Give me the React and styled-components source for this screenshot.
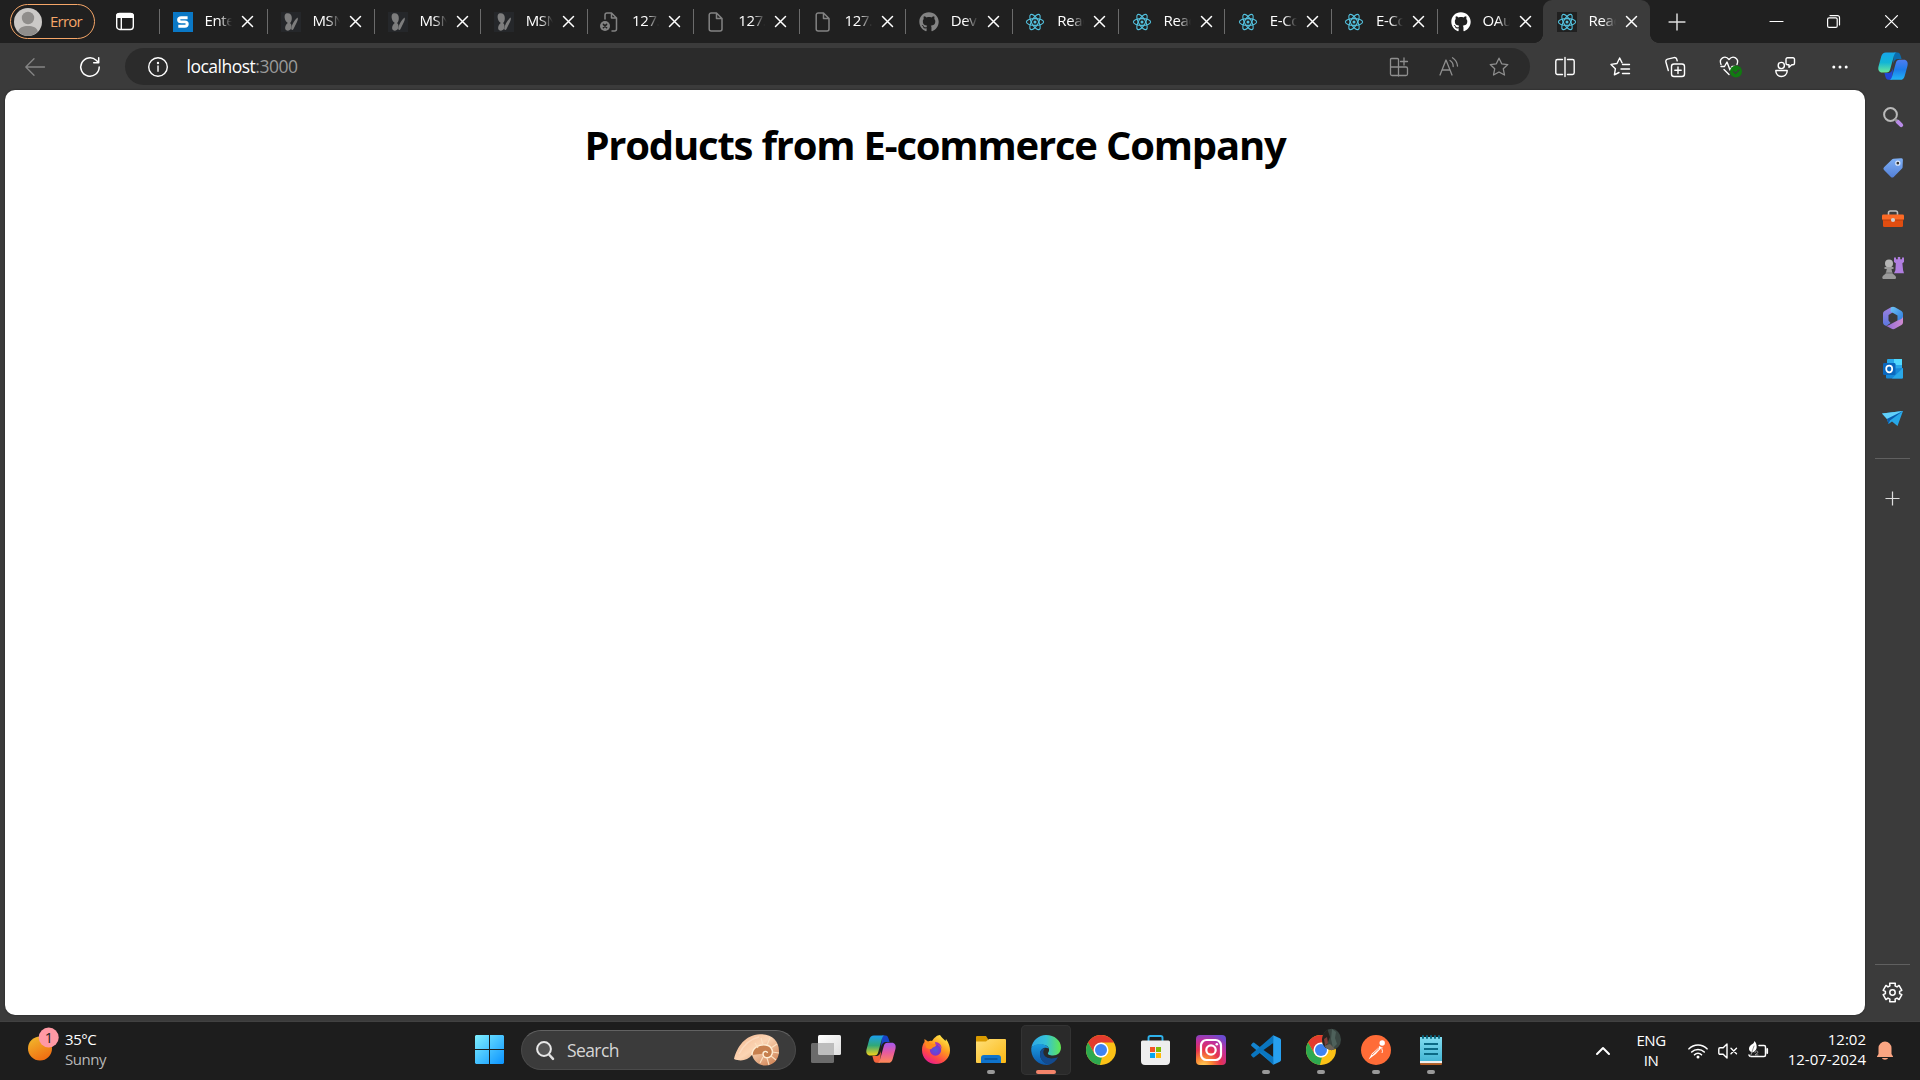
import React from "react";
import styled, { createGlobalStyle, css } from "styled-components";
import { FaGithub } from "react-icons/fa";

const Global = createGlobalStyle`
  * { box-sizing: border-box; }
  html, body { margin: 0; padding: 0; background: #3b3b3b; }
  body { font-family: "Open Sans", "Noto Sans", sans-serif; overflow: hidden; }
  svg { display: block; flex: none; overflow: visible; }
`;

const Screen = styled.div`
  width: 1920px; height: 1080px; display: flex; flex-direction: column;
  background: #3b3b3b; color: #fff;
`;
const TabBar = styled.div`
  height: 43px; flex: none; display: flex; background: #202020; padding-left: 10px;
`;
const Profile = styled.div`
  width: 85px; height: 35px; margin-top: 4px; border: 1.4px solid #f5a668; border-radius: 18px;
  display: flex; align-items: center; padding-left: 3px; gap: 8px; color: #f5a668;
  font-size: 15px; letter-spacing: -0.75px; line-height: 20px;
`;
const ProfileName = styled.span`margin-top: -2px;`;
const WorkspaceBox = styled.div`
  width: 64px; padding: 12px 0 0 21px;
`;
const Tabs = styled.div`display: flex;`;
const Tab = styled.div`
  width: ${(p) => p.$w}px; height: 43px; display: flex; align-items: center; position: relative;
  padding-left: 13.5px;
  ${(p) => p.$active ? css`
    background: #3b3b3b; border-radius: 9px 9px 0 0; margin-left: -1px;
    &::before, &::after { content: ""; position: absolute; bottom: 0; width: 9px; height: 9px; }
    &::before { left: -9px; background: radial-gradient(circle at 0 0, #202020 8.6px, #3b3b3b 9.2px); }
    &::after { right: -9px; background: radial-gradient(circle at 100% 0, #202020 8.6px, #3b3b3b 9.2px); }
  ` : css`
    &::before { content: ""; position: absolute; left: 0; top: 9px; width: 1px; height: 25px; background: #6b6b6b; }
  `}
`;
const Favicon = styled.div`
  width: 20px; height: 20px; flex: none; display: flex; align-items: center; justify-content: center;
  background: ${(p) => p.$bg || "transparent"};
  color: ${(p) => p.$color || "#fff"};
`;
const TabTitle = styled.span`
  width: 36px; flex: none; margin: -3px 0 0 12px; white-space: nowrap; font-size: 15px; line-height: 20px;
  letter-spacing: -0.4px; color: #fff;
  mask-image: linear-gradient(90deg, #000 14px, transparent 27px);
`;
const TabClose = styled.div`margin-left: 1px;`;
const WindowButtons = styled.div`
  margin-left: auto; display: flex; align-items: center;
`;
const WindowButton = styled.div`
  width: ${(p) => p.$w || 57.5}px; display: flex; justify-content: center;
`;
const NewTab = styled.div`width: 54px; display: flex; align-items: center; justify-content: center;`;

const Body = styled.div`flex: 1; display: flex; min-height: 0;`;
const Main = styled.div`width: 1865px; display: flex; flex-direction: column;`;
const Toolbar = styled.div`
  height: 47px; display: flex; align-items: flex-start; padding: 5px 0 0 7.5px;
`;
const NavSlot = styled.div`
  width: 55px; height: 37px; flex: none; display: flex; align-items: center; justify-content: center;
`;
const AddressBar = styled.div`
  width: 1405px; height: 37px; flex: none; border-radius: 19px; background: #2b2b2b; margin-left: 7.5px;
  display: flex; align-items: center; padding-left: 22.5px;
`;
const Address = styled.span`
  margin: -1px auto 0 19px; font-size: 17.5px; line-height: 24px; letter-spacing: -0.5px; color: #fff;
  span { color: #9a9a9a; }
`;
const AddressIcons = styled.div`
  display: flex; width: 150px; margin-right: 6px; color: #8f8f8f;
`;
const AddressSlot = styled.div`width: 50px; display: flex; justify-content: center;`;
const ToolbarIcons = styled.div`display: flex; margin-left: 7px;`;
const Page = styled.div`
  flex: none; height: 925px; margin-left: 5px; border-radius: 10px; background: #fff; color: #000;
  box-shadow: 0 0 2px rgba(0,0,0,.5);
`;
const Heading = styled.h1`
  margin: 0; padding-top: 28px; text-align: center; font-size: 40px; line-height: 54px; font-weight: 700;
  letter-spacing: -1.2px; white-space: nowrap;
`;
const Sidebar = styled.div`
  width: 55px; display: flex; flex-direction: column; align-items: center; padding-top: 4px;
`;
const SideSlot = styled.div`
  height: ${(p) => p.$h || 50.2}px; width: 55px; flex: none; display: flex; align-items: center; justify-content: center;
`;
const SideLine = styled.div`width: 35px; height: 1px; flex: none; background: #606060; margin-top: ${(p) => p.$mt || 0}px;`;

const Taskbar = styled.div`
  height: 59px; flex: none; display: flex; align-items: stretch; background: #1d1d1d; border-top: 1px solid #414141;
`;
const Weather = styled.div`width: 462px; display: flex; padding: 4px 0 0 27px; gap: 6px;`;
const TaskText = styled.div`
  font-size: 15px; line-height: 20px; letter-spacing: ${(p) => p.$ls ?? -0.45}px; text-align: ${(p) => p.$align || "left"};
  padding-top: ${(p) => p.$pt ?? 3}px; color: #fff; white-space: nowrap; width: ${(p) => p.$w ? p.$w + "px" : "auto"};
`;
const Dim = styled.div`color: #b9b9b9;`;
const AppSlot = styled.div`
  width: 55px; display: flex; flex-direction: column; align-items: center; padding-top: 3px;
`;
const AppTile = styled.div`
  width: 50px; height: 50px; border-radius: 5px; display: flex; flex-direction: column; align-items: center;
  justify-content: flex-end;
  ${(p) => p.$active && css`background: #2a2a2a; box-shadow: inset 0 0 0 1px #333;`}
`;
const AppIcon = styled.div`height: 30px; margin-bottom: 5px;`;
const Indicator = styled.div`
  height: 4px; border-radius: 2px; margin-bottom: 1px;
  width: ${(p) => (p.$state === "active" ? 20 : 8)}px;
  background: ${(p) => (p.$state === "active" ? "#f4846a" : p.$state === "open" ? "#999" : "transparent")};
`;
const SearchPill = styled.div`
  width: 275px; height: 40px; margin: 8px 2.5px 0 4px; border-radius: 20px; background: #3b3b3b;
  border: 1px solid #4a4a4a; border-top-color: #626262; display: flex; align-items: center; padding: 0 16px 0 14px;
`;
const SearchText = styled.span`
  margin: -1px auto 0 13px; font-size: 17.5px; letter-spacing: -0.6px; color: #d6d6d6;
`;
const Tray = styled.div`margin-left: auto; display: flex; align-items: flex-start; padding-right: 16px;`;
const TrayIcon = styled.div`
  width: ${(p) => p.$w}px; height: 57px; display: flex; align-items: center; justify-content: center;
`;

const Svg = ({ s = 20, w, h, vb, children, ...rest }) => (
  <svg width={w || s} height={h || s} viewBox={vb || `0 0 ${w || s} ${h || s}`} fill="none" {...rest}>{children}</svg>
);
const Line = ({ sw = 1.4, color = "currentColor", children, ...r }) => (
  <Svg stroke={color} strokeWidth={sw} strokeLinecap="round" strokeLinejoin="round" {...r}>{children}</Svg>
);

const ReactLogo = () => (
  <Line s={20} color="#53c1de" sw={1.1}>
    {[0, 60, 120].map((a) => <ellipse key={a} cx="10" cy="10" rx="8.6" ry="3.4" transform={`rotate(${a} 10 10)`} />)}
    <circle cx="10" cy="10" r="1.5" fill="#53c1de" stroke="none" />
  </Line>
);
const Butterfly = () => (
  <Svg s={20} fill="#7d7d7d">
    <path d="M5 1.5C8 .5 11 2 10.8 6c0 2.5-.5 4-1.8 5 1.5 1 2 3 1 5.5-.8 2-3.500 2.8-5 1.500-1.500-1.300-1-5 1.800-7C3.500 9 2.500 3 5 1.500z" />
    <path d="M16.500 5.500c.8 1 .2 3-.8 5l-3.200 6.500c-.7 1.500-2.500 1-2.300-.5.3-3 2.800-8 6.300-11z" />
  </Svg>
);
const SLogo = () => (
  <Svg s={20}><path d="M14.600 5.700H8.200c-3.500 0-3.500 4.200 0 4.200h3.600c3.300 0 3.300 4.400 0 4.400H5.300" stroke="#fff" strokeWidth="2.900" /></Svg>
);
const FileIcon = ({ error }) => (
  <Line s={20} color="#838383" sw={1.5}>
    <path d={error ? "M5 7V3a2 2 0 0 1 2-2h4.500l5 5v11a2 2 0 0 1-2 2H12M11.500 1v5h5" : "M5.200 1h5.300l5.500 5.500V17a2 2 0 0 1-2 2H5.200a2 2 0 0 1-2-2V3a2 2 0 0 1 2-2zM10.500 1v5.500H16"} />
    {error && <><circle cx="5" cy="14" r="5" fill="#838383" stroke="none" /><path d="M3.400 12.400l3.200 3.200M6.600 12.400l-3.200 3.200" stroke="#202020" strokeWidth="1.500" /></>}
  </Line>
);
const Cross = ({ s = 11, sw = 1.5 }) => <Line s={s} sw={sw} color="#fff" vb="0 0 11 11"><path d="M.5.5l10 10M10.500.5l-10 10" /></Line>;
const Avatar = () => (
  <Svg s={28}>
    <circle cx="14" cy="14" r="14" fill="#cbc9c7" />
    <circle cx="14" cy="10" r="6.200" fill="#8f8d8b" />
    <path d="M4.200 23.500C5 19.500 9 18 14 18s9 1.500 9.800 5.500A14 14 0 0 1 14 28a14 14 0 0 1-9.800-4.500z" fill="#8f8d8b" />
  </Svg>
);
const WorkspaceIcon = () => (
  <Svg w={18} h={19}>
    <rect x=".7" y="1.500" width="16.600" height="16" rx="3" stroke="#fff" strokeWidth="1.400" />
    <path d="M0 6V4a3 3 0 0 1 3-3h12a3 3 0 0 1 3 3v2z" fill="#fff" /><path d="M5.300 6v11" stroke="#fff" strokeWidth="1.400" />
  </Svg>
);

const BackIcon = () => <Line w={20} h={18} color="#858585" sw={1.300}><path d="M19.500 9H.8M9 .8L.8 9 9 17.200" /></Line>;
const ReloadIcon = () => <Line s={20} sw={1.500}><path d="M19.200 10A9.200 9.200 0 1 1 16.200 3.200L18.500 5.500M18.700.800v5h-5" /></Line>;
const InfoIcon = () => <Line s={20} sw={1.400}><circle cx="10" cy="10" r="9.300" /><path d="M10 9v5.300" /><circle cx="10" cy="6" r=".5" fill="#fff" /></Line>;
const AppsIcon = () => <Line s={20} sw={1.300}><path d="M9.500 19V2.500a1 1 0 0 0-1-1H2.500a1 1 0 0 0-1 1V17a1.500 1.500 0 0 0 1.500 1.500h14a1.500 1.500 0 0 0 1.500-1.500v-5.500a1.500 1.500 0 0 0-1.500-1.500h-15.500M15 1v7M11.500 4.500h7" /></Line>;
const ReadIcon = () => <Line s={20} sw={1.300}><path d="M1 18L7 3l6 15M3.200 13h7.600M11 3.500a7 7 0 0 1 3.200 6M13.500.8A11 11 0 0 1 18.500 9" /></Line>;
const starPath = "M10 1.200l2.700 5.600 6.100.8-4.500 4.200 1.200 6.200-5.500-3-5.500 3 1.200-6.200L1.200 7.600l6.100-.8z";
const StarIcon = () => <Line s={20} sw={1.300}><path d={starPath} /></Line>;
const SplitIcon = () => <Line s={20} sw={1.400}><path d="M7.500 2.500h-5A1.700 1.700 0 0 0 .8 4.200v11.600a1.700 1.700 0 0 0 1.700 1.700h5M12.500 2.500h5a1.700 1.700 0 0 1 1.700 1.700v11.600a1.700 1.700 0 0 1-1.700 1.700h-5M10 .5v19" /></Line>;
const FavIcon = () => <Line s={20} sw={1.400}><path d="M12 5.800L9.700 1 7 6.500 1 7.400l4.400 4.300-1 6.100L9 15.500M12.500 7.500h7M11 12h8.500M12.500 16.500h7" /></Line>;
const CollectionIcon = () => <Line s={20} sw={1.400}><rect x="6.500" y="7" width="13" height="12.500" rx="2.500" /><path d="M13 10v6.500M9.800 13.200h6.400M3.300 13.500L.9 5a2.300 2.300 0 0 1 1.700-2.900L9 .6a2.300 2.300 0 0 1 2.800 1.700l.4 1.600" /></Line>;
const HeartIcon = () => (
  <Line w={22} h={21} sw={1.400}>
    <path d="M2 8.500C-.5 2.500 6-1.500 10 3.500c4-5 10.500-1 8 5M2 10.500h3.500l2.500-4.500 3 8 2-3.500h3M5 13.500l5 5" />
    <circle cx="17" cy="15.500" r="6" fill="#107c10" stroke="none" /><path d="M14.500 15.500l2 2 3.500-3.500" stroke="#3b3b3b" strokeWidth="1.200" />
  </Line>
);
const PeopleIcon = () => <Line s={20} sw={1.400}><circle cx="6.300" cy="8.500" r="3.100" /><path d="M.8 13.500h11.400c.2 8-11.600 8-11.400 0zM12.500 .8h5.500a1.500 1.500 0 0 1 1.500 1.500v4A1.500 1.500 0 0 1 18 7.800h-1.200l-2.800 2.500V7.800h-1.500a1.500 1.500 0 0 1-1.500-1.500v-4A1.500 1.500 0 0 1 12.500.8z" /></Line>;
const DotsIcon = () => <Svg w={16} h={4} fill="#fff"><circle cx="1.800" cy="2" r="1.500" /><circle cx="8" cy="2" r="1.500" /><circle cx="14.200" cy="2" r="1.500" /></Svg>;

const Copilot = ({ colors, id, s = 30 }) => (
  <Svg w={s} h={s * 0.94} vb="0 0 30 28">
    <defs>
      <linearGradient id={id + "a"} x1="0" y1="0" x2="0" y2="1"><stop stopColor={colors[0]} /><stop offset=".5" stopColor={colors[1]} /><stop offset="1" stopColor={colors[2]} /></linearGradient>
      <linearGradient id={id + "b"} x1="0" y1="0" x2="0" y2="1"><stop stopColor={colors[3]} /><stop offset=".5" stopColor={colors[4]} /><stop offset="1" stopColor={colors[5]} /></linearGradient>
    </defs>
    <path d="M16 .3h3.500c2 0 2.600 1.600 3.200 3.600l.9 3.100H20c-3 0-4 2-5 5z" fill={colors[6]} />
    <path d="M14 27.700h-3.500c-2 0-2.600-1.600-3.200-3.600L6.400 21H10c3 0 4-2 5-5z" fill={colors[7]} />
    <path d="M8 .3h11c-2 0-2.500 1.500-3.200 3.800l-3.600 13c-.7 2.400-1.700 3.300-3.700 3.300H4.200c-3 0-4.500-2.400-3.700-6L3.300 4.200C4 1.500 5.500.3 8 .3z" fill={`url(#${id}a)`} />
    <path d="M22 27.700H11c2 0 2.500-1.500 3.200-3.800l3.600-13c.7-2.400 1.700-3.300 3.700-3.300h4.300c3 0 4.500 2.400 3.700 6l-2.800 10.200c-.7 2.700-2.200 3.900-4.700 3.900z" fill={`url(#${id}b)`} />
  </Svg>
);

const SideSearch = () => (
  <Svg s={20}><circle cx="7.500" cy="7.500" r="6.400" stroke="#b9b9b9" strokeWidth="2" /><path d="M14.500 14.500l3.700 3.700" stroke="#b98be8" strokeWidth="4" strokeLinecap="round" /><path d="M12 12l2 2" stroke="#999" strokeWidth="2" /></Svg>
);
const Tag = () => (
  <Svg s={20}><defs><linearGradient id="tag" x2="0" y2="1"><stop stopColor="#7fb0f5" /><stop offset="1" stopColor="#5380d8" /></linearGradient></defs>
    <path d="M10.500.7L18 .2a1.700 1.700 0 0 1 1.900 1.900l-.3 7.200a2 2 0 0 1-.6 1.300l-8.300 8.300a2 2 0 0 1-2.800 0L1 12a2 2 0 0 1 0-2.800l8.200-7.900a2 2 0 0 1 1.300-.6z" fill="url(#tag)" />
    <circle cx="14.800" cy="5.200" r="2" stroke="#dce8fb" strokeWidth="1.300" fill="#333" /></Svg>
);
const Toolbox = () => (
  <Svg w={22} h={17}><path d="M6.500 5V2.800A1.800 1.800 0 0 1 8.300 1h5.400a1.800 1.800 0 0 1 1.800 1.800V5" stroke="#bdbdbd" strokeWidth="1.600" />
    <rect x="1" y="8" width="20" height="9" rx="1.200" fill="#e04d10" /><rect x="0" y="4.500" width="22" height="5.500" rx="1.200" fill="#fb6a26" /><path d="M.5 10h21" stroke="#b83e0c" />
    <circle cx="11" cy="10" r="2.100" fill="#cfcfcf" /></Svg>
);
const Chess = () => (
  <Svg w={22} h={22} vb="0 0 22 22">
    <path d="M12 .5h2v1.700h1.800V0h2.400v2.200H20V.5h2V5l-1.600 1.300.7 7 .9 3H12l1.400-3 .4-7L12 5z" fill="#b07ee0" />
    <circle cx="7" cy="6.500" r="4" fill="#b5b5b5" /><path d="M2.500 10h9v2H9.500l1 4.500 3 2.500a2.500 2.500 0 0 1 0 3H.8a2.500 2.500 0 0 1 0-3l3-2.500 1-4.500H2.500z" fill="#9a9a9a" /><path d="M3.500 16h7" stroke="#6d6d6d" /></Svg>
);
const M365 = () => (
  <Svg w={20} h={22}>
    <defs>
      <linearGradient id="m1" x2="0" y2="1"><stop stopColor="#a080e0" /><stop offset="1" stopColor="#5b78e0" /></linearGradient>
      <linearGradient id="m2" x2="1" y2="1"><stop stopColor="#6fc4f5" /><stop offset="1" stopColor="#2b78dd" /></linearGradient>
      <linearGradient id="m3" x2="1"><stop stopColor="#8a6ad8" /><stop offset="1" stopColor="#d08ad0" /></linearGradient>
    </defs>
    <path d="M8 .2L1.500 4A3 3 0 0 0 0 6.500v9c0 2 1.500 3.200 3.500 3.200L7.500 16l-2-2.500V8L12 4z" fill="url(#m1)" />
    <path d="M8 .3a4 4 0 0 1 4 0l6.500 3.800A3.500 3.500 0 0 1 20 7v5l-5.500 2.500V8.500L7.500 4.500z" fill="url(#m2)" />
    <path d="M20 9v6.500a3 3 0 0 1-1.500 2.500l-6.300 3.600a4 4 0 0 1-4 0L2 18.200c2 1 3.700.3 5-.7l7.500-4c2.500-1 5.500-1.500 5.500-4.500z" fill="url(#m3)" />
  </Svg>
);
const Outlook = () => (
  <Svg s={20}><rect x="4" y="0" width="15" height="12" rx="1" fill="#28a8ea" /><rect x="11" y="0" width="8" height="6" fill="#50d9ff" /><path d="M3 10l17-1v9.500a1 1 0 0 1-1 1H4a1 1 0 0 1-1-1z" fill="#1688d8" /><path d="M20 9L9 19.500h10a1 1 0 0 0 1-1z" fill="#2aa8e8" />
    <rect x="0" y="4" width="12.500" height="12" rx="1.300" fill="#0a67bd" /><ellipse cx="6.200" cy="10" rx="3" ry="3.300" stroke="#fff" strokeWidth="1.700" /></Svg>
);
const Telegram = () => (
  <Svg w={21} h={15}><path d="M0 2.500L21 0l-5.500 15L10 10.500 6.500 13 5 8z" fill="#27a7e7" /><path d="M0 2.500L21 0 5 8z" fill="#61d0fb" /><path d="M5 8L21 0 8 9.500 6.500 13z" fill="#0b5cad" /></Svg>
);
const Plus = ({ s = 16, sw = 1.300 }) => <Line s={s} sw={sw} color="#ddd" vb="0 0 16 16"><path d="M8 .5v15M.5 8h15" strokeLinecap="butt" /></Line>;
const gearPts = () => {
  const out = [];
  for (let i = 0; i < 6; i++) {
    [[-17, 9.600], [17, 9.600], [21, 7.200], [39, 7.200]].forEach(([d, r]) => {
      const a = ((i * 60 + d - 90) * Math.PI) / 180;
      out.push(`${(10.500 + r * Math.cos(a)).toFixed(2)},${(10.500 + r * Math.sin(a)).toFixed(2)}`);
    });
  }
  return out.join(" ");
};
const Gear = () => <Line s={21} sw={1.500}><polygon points={gearPts()} /><circle cx="10.500" cy="10.500" r="2.700" /></Line>;

const SunIcon = () => (
  <Svg w={32} h={34}><defs><linearGradient id="sun" x1=".2" y1="0" x2=".7" y2="1"><stop stopColor="#f0b72c" /><stop offset="1" stopColor="#f16a10" /></linearGradient></defs>
    <circle cx="13" cy="22.500" r="12" fill="url(#sun)" /><circle cx="21.700" cy="11.500" r="10" fill="#ff99a4" />
    <text x="22" y="17" fontSize="14.500" textAnchor="middle" fill="#222" fontFamily="Open Sans, sans-serif">1</text></Svg>
);
const StartIcon = () => (
  <Svg s={29}><defs><linearGradient id="win" gradientUnits="userSpaceOnUse" x2="29" y2="29"><stop stopColor="#7ff0ff" /><stop offset="1" stopColor="#0b93ff" /></linearGradient></defs>
    <path fill="url(#win)" d="M1 0h13v14H0V1zM15 0h13l1 1v13H15zM0 15h14v14H1l-1-1zM15 15h14v13l-1 1H15z" /></Svg>
);
const SearchIcon = () => <Svg w={18} h={19}><circle cx="8" cy="8" r="6.900" fill="#555" stroke="#e8e8e8" strokeWidth="2" /><path d="M13 13.500l4 4.300" stroke="#e0e0e0" strokeWidth="2.500" strokeLinecap="round" /></Svg>;
const Shell = () => (
  <Svg w={45} h={32}><defs><linearGradient id="sh" x2="1" y2="1"><stop stopColor="#f2b58d" /><stop offset=".45" stopColor="#fbd4b3" /><stop offset="1" stopColor="#c97848" /></linearGradient></defs>
    <path d="M0 25C3 13 11 1 26 .3 38 0 45 7 45 17c0 9-6 14.500-13.500 14.500C24 31.500 20 27 18 21c-4 5-11 7-18 4z" fill="url(#sh)" />
    <path d="M18 21c0-7 7-11 14-10 6 1 8 7 5 11-3 3-8 2-8-2 0-3 4-3.500 4.500-1" fill="#c7804e" stroke="#fff0d8" strokeWidth="1.400" />
    <path d="M29 11L27 4M33 11l3-7M37 14l6-4M38 18l7 1M37 22l5 4M33 24l2 7M29 23l-3 6M24 14l-3-5" stroke="#fbe0c0" strokeWidth="1.100" />
    <path d="M5 20C9 12 15 5 25 3" stroke="#fde2cb" strokeWidth="1.500" opacity=".6" /></Svg>
);
const TaskView = () => (
  <Svg w={30} h={28}><defs><linearGradient id="tv" x2="1" y2="1"><stop stopColor="#fff" /><stop offset="1" stopColor="#dedede" /></linearGradient></defs>
    <rect x="7" y="0" width="23" height="20" rx="1.500" fill="url(#tv)" /><rect x="0" y="8" width="23" height="20" rx="1.500" fill="#6b6b6b" /><path d="M7 8h16v12H8.500A1.500 1.500 0 0 1 7 18.500z" fill="#bdbdbd" /></Svg>
);
const Firefox = () => (
  <Svg w={28} h={29}><defs><linearGradient id="ff" x1=".8" x2=".2" y1="0" y2="1"><stop stopColor="#fff44f" /><stop offset=".4" stopColor="#ff9a1e" /><stop offset=".7" stopColor="#ff4a45" /><stop offset="1" stopColor="#e3159b" /></linearGradient>
    <radialGradient id="ffp"><stop stopColor="#4b5ce0" /><stop offset="1" stopColor="#8330c9" /></radialGradient></defs>
    <path d="M18 0c2 3 4 4 5.500 6l.5-2c3 4 4 8 4 11.500C28 23 22 29 14 29S0 23 0 15c0-3.500 1-6 2.500-8V4L6 6.500c2-1 3-.7 4-.5 2-3 5-6 8-6z" fill="url(#ff)" />
    <circle cx="13.500" cy="15" r="5.700" fill="url(#ffp)" /><path d="M3 8c3-2 6 0 7 1 2 0 3.500 0 4.500.5-.5 2.500-4 2.500-5 4.500-1.500 1-3-1-5-1z" fill="#ff8a1c" /><path d="M13 7c4 0 7 3 6.500 7-1-3-3-4-6-4.500z" fill="#a234bb" /></Svg>
);
const Folder = () => (
  <Svg w={30} h={27}><defs><linearGradient id="fo" x2="1" y2="1"><stop stopColor="#ffe07a" /><stop offset="1" stopColor="#fbb813" /></linearGradient></defs>
    <path d="M0 2a1 1 0 0 1 1-1h9l2 3h0v8H0z" fill="#d99a00" /><path d="M0 6.500h10l3-2.500h16a1 1 0 0 1 1 1V27a1 1 0 0 1-1 1H1a1 1 0 0 1-1-1z" fill="url(#fo)" />
    <path d="M5 28v-5a3 3 0 0 1 3-3h14a3 3 0 0 1 3 3v5z" fill="#0f73cc" /><path d="M8.500 24h13" stroke="#064b8e" strokeWidth="1.300" /></Svg>
);
const Edge = () => (
  <Svg s={30} vb="0 0 30 30"><defs>
    <linearGradient id="e1" x1="0" x2="1"><stop stopColor="#2fa8e8" /><stop offset=".5" stopColor="#35c1d8" /><stop offset="1" stopColor="#62e84f" /></linearGradient>
    <linearGradient id="e2" x1="0" y1="0" x2="0" y2="1"><stop stopColor="#1b9de2" /><stop offset="1" stopColor="#0d58ac" /></linearGradient></defs>
    <path d="M.3 13C1.500 5.500 7.500 0 15 0c8.500 0 15 5.500 15 12.500 0 5-3.500 8-8 8-3.500 0-5.500-1-5-2.500 2.500-3 1-8-6-8.500C5 9.500 1.500 11 .3 13z" fill="url(#e1)" />
    <path d="M.3 13C2 10 6 8.500 10.500 9c3.500.4 6 2 7.200 4.500C13 11.500 9 14.500 9 19c0 5 4 10 10 10.500-2 .6-4 .5-6 .3C5 28.500-.5 21 .3 13z" fill="url(#e2)" />
    <path d="M9 19c0-3.500 2.500-5.500 5-5.500-1.500 1.500-2 3-1.500 5 1 4.500 8 6.500 14.500 3.500-1.500 3.500-5 6.500-9 7.700C13 29 9 24.500 9 19z" fill="#134a8e" /></Svg>
);
const Chrome = () => (
  <Svg s={30} vb="0 0 30 30"><circle cx="15" cy="15" r="15" fill="#fbc116" />
    <path d="M2 7.500A15 15 0 0 1 28 7.500H15L8.500 18.750z" fill="#e33b2e" /><path d="M2 7.500L8.500 18.750A7.500 7.500 0 0 0 17 22.200L14.500 30A15 15 0 0 1 2 7.500z" fill="#2da94f" /><path d="M21.500 18.750L15 30h-1l2-8z" fill="#fbc116" />
    <circle cx="15" cy="15" r="7.500" fill="#fff" /><circle cx="15" cy="15" r="6" fill="#3f83f2" /></Svg>
);
const ChromeUser = () => (
  <Svg s={30}><Chrome />
    <defs><clipPath id="cu"><ellipse cx="25.500" cy="4.500" rx="9.500" ry="10.700" /></clipPath></defs>
    <g clipPath="url(#cu)"><rect x="14" y="-7" width="24" height="24" fill="#3a4743" /><path d="M14-2l7-5 3 9-5 12-6-2z" fill="#25221f" /><path d="M26-6l4 3-1 6 2 6-4 4-2-9z" fill="#4e615b" /><path d="M18 4l3-2 1 6-3 3z" fill="#7b3f3a" /><path d="M18 11l6-2 5 5-5 2z" fill="#6b6257" /></g></Svg>
);
const Store = () => (
  <Svg w={29} h={30} style={{ marginRight: 1 }}><path d="M7.500 7V2.800A1.800 1.800 0 0 1 9.300 1h10.400a1.800 1.800 0 0 1 1.800 1.800V7" stroke="#2eb1ea" strokeWidth="1.900" />
    <path d="M0 7a1.500 1.500 0 0 1 1.500-1.500h26A1.500 1.500 0 0 1 29 7v19a4 4 0 0 1-4 4H4a4 4 0 0 1-4-4z" fill="#eee" />
    <path d="M9 12h5v5H9z" fill="#f35325" /><path d="M15 12h5v5h-5z" fill="#81bc06" /><path d="M9 18h5v5H9z" fill="#05a6f0" /><path d="M15 18h5v5h-5z" fill="#ffba08" /></Svg>
);
const Instagram = () => (
  <Svg s={30}><defs><radialGradient id="ig" cx=".25" cy="1.050" r="1.150"><stop stopColor="#ffd95e" /><stop offset=".25" stopColor="#fb8a34" /><stop offset=".5" stopColor="#e6334f" /><stop offset=".75" stopColor="#c32f9a" /><stop offset="1" stopColor="#6b4bd0" /></radialGradient></defs>
    <rect width="30" height="30" rx="4" fill="url(#ig)" /><rect x="5" y="5" width="20" height="20" rx="5.500" stroke="#fff" strokeWidth="2.200" /><circle cx="15" cy="15" r="4.700" stroke="#fff" strokeWidth="2.200" /><circle cx="20.800" cy="9.200" r="1.300" fill="#fff" /></Svg>
);
const VsCode = () => (
  <Svg s={30} vb="0 0 30 30"><path d="M22.300.3L9.800 12.700 3.300 7.700a1.300 1.300 0 0 0-1.500.1L.5 9.200a1.200 1.200 0 0 0 0 1.700L22.300 29.700 23 22z" fill="#1484cf" /><path d="M22.300 29.700L9.800 17.300l-6.500 5a1.300 1.300 0 0 1-1.500-.1L.5 20.800a1.200 1.200 0 0 1 0-1.700L22.300.3 23 8z" fill="#0a76c0" /><path d="M22.300 8L12.500 15l9.800 7z" fill="#1d1d1d" /><path d="M22.300.3l6.500 3A2 2 0 0 1 30 5v20a2 2 0 0 1-1.200 1.700l-6.500 3z" fill="#27a0f0" /></Svg>
);
const Postman = () => (
  <Svg s={30}><circle cx="15" cy="15" r="15" fill="#ff6c37" /><circle cx="21.200" cy="8" r="2.700" fill="#fff" /><path d="M18.500 11l2.300 1.500-6 6.500-7.300 5.500 3.500-6z" fill="#fff" /><path d="M12 17l6-5M11 20l7-6.500" stroke="#ff6c37" strokeWidth=".8" /><path d="M21 12c-1 3 1.500 3 0 6" stroke="#fff" strokeWidth=".9" /></Svg>
);
const Notepad = () => (
  <Svg w={22} h={30}><defs><linearGradient id="np" x2="0" y2="1"><stop stopColor="#80dcf0" /><stop offset="1" stopColor="#3fb3d3" /></linearGradient></defs>
    <path d="M0 2h22v26H0z" fill="url(#np)" /><path d="M0 26h22v2.500H0z" fill="#eee" /><path d="M0 28.300h22V29a1 1 0 0 1-1 1H1a1 1 0 0 1-1-1z" fill="#b85c1e" />
    <path d="M3 1v2M7 1v2M11 1v2M15 1v2M19 1v2" stroke="#0a6780" strokeWidth="1.900" strokeLinecap="round" /><path d="M4 9h14M4 14h14M4 19h14" stroke="#0b6a85" strokeWidth="1.800" /></Svg>
);
const Wifi = () => <Line w={20} h={16} sw={1.600}><path d="M1 5.800a12.500 12.500 0 0 1 18 0M3.700 9a9 9 0 0 1 12.600 0M6.500 11.800a5 5 0 0 1 7 0" /><circle cx="10" cy="14" r="1.500" fill="#fff" stroke="none" /></Line>;
const Speaker = () => <Line w={20} h={16} sw={1.400}><path d="M9 1L5.200 4.700H2A1.200 1.200 0 0 0 .8 5.900v4.200A1.200 1.200 0 0 0 2 11.300h3.200L9 15zM13 5.200l5.500 5.500M18.500 5.200L13 10.700" /></Line>;
const Battery = () => <Line w={20} h={17} sw={1.500}><path d="M11 3.500h5A1.500 1.500 0 0 1 17.500 5v8a1.500 1.500 0 0 1-1.500 1.500H3A2 2 0 0 1 1 13" /><path d="M19.200 7v4" strokeWidth="1.800" /><path d="M6.500-1c3.500 4 3 10.500-2.500 11.500C-1 8.500 1 3.500 4.500 2 5.500 1.500 6 .5 6.500-1z" fill="#fff" stroke="none" /><path d="M6 4L2.500 14M7 10.500c0-2 3-2 3 0L7 13h3" strokeWidth="1" stroke="#999" /></Line>;
const Bell = () => <Svg w={16} h={19} fill="#faa582"><path d="M1.500 13V7a6.500 6.500 0 0 1 13 0v6l1.500 2.500v.5H0v-.5zM5 17h6c-.5 2.300-5.500 2.300-6 0z" /></Svg>;

const FAV = {
  s: <Favicon $bg="#0a78c6"><SLogo /></Favicon>,
  msn: <Favicon $bg="#25272a"><Butterfly /></Favicon>,
  err: <Favicon><FileIcon error /></Favicon>,
  file: <Favicon><FileIcon /></Favicon>,
  ghDim: <Favicon $color="#838383"><FaGithub size={20} /></Favicon>,
  gh: <Favicon><FaGithub size={20} /></Favicon>,
  react: <Favicon><ReactLogo /></Favicon>,
  reactOn: <Favicon $bg="#202020"><ReactLogo /></Favicon>,
};
const TABS = [
  ["s", "Ente", 108], ["msn", "MSN", 107], ["msn", "MSN", 106.200], ["msn", "MSN", 106.400], ["err", "127."], ["file", "127."], ["file", "127."],
  ["ghDim", "Dev", 106.500], ["react", "Reac"], ["react", "Reac"], ["react", "E-Co"], ["react", "E-Co", 106.500], ["gh", "OAu", 107],
];
const APPS = [
  [<TaskView />], [<Copilot id="cb" colors={["#1b9ff0", "#30a878", "#f5d21a", "#a458f0", "#e85b9d", "#ff8a55", "#1644c8", "#f4653e"]} />], [<Firefox />],
  [<Folder />, "open"], [<Edge />, "active"], [<Chrome />], [<Store />], [<Instagram />], [<VsCode />, "open"], [<ChromeUser />, "open"], [<Postman />, "open"], [<Notepad />, "open"],
];

export default function App() {
  return (
    <Screen>
      <Global />
      <TabBar>
        <Profile><Avatar /><ProfileName>Error</ProfileName></Profile>
        <WorkspaceBox><WorkspaceIcon /></WorkspaceBox>
        <Tabs>
          {TABS.map(([icon, title, w = 106.260], i) => (
            <Tab key={i} $w={w}>{FAV[icon]}<TabTitle>{title}</TabTitle><TabClose><Cross /></TabClose></Tab>
          ))}
          <Tab $active $w={107}>{FAV.reactOn}<TabTitle>Reac</TabTitle><TabClose><Cross /></TabClose></Tab>
        </Tabs>
        <NewTab><Plus s={18} /></NewTab>
        <WindowButtons>
          <WindowButton><Line w={13} h={1} color="#fff" sw={1.200}><path d="M0 .5h13" /></Line></WindowButton>
          <WindowButton $w={57}><Line s={13} color="#fff" sw={1.200}><rect x=".6" y="2.800" width="9.600" height="9.600" rx="1.500" /><path d="M3 .6h7.500a2 2 0 0 1 2 2V10" /></Line></WindowButton>
          <WindowButton $w={58}><Cross s={13} sw={1.100} /></WindowButton>
        </WindowButtons>
      </TabBar>
      <Body>
        <Main>
          <Toolbar>
            <NavSlot><BackIcon /></NavSlot>
            <NavSlot><ReloadIcon /></NavSlot>
            <AddressBar>
              <InfoIcon />
              <Address>localhost<span>:3000</span></Address>
              <AddressIcons>
                <AddressSlot><AppsIcon /></AddressSlot><AddressSlot><ReadIcon /></AddressSlot><AddressSlot><StarIcon /></AddressSlot>
              </AddressIcons>
            </AddressBar>
            <ToolbarIcons>
              {[SplitIcon, FavIcon, CollectionIcon, HeartIcon, PeopleIcon, DotsIcon].map((I, i) => <NavSlot key={i}><I /></NavSlot>)}
            </ToolbarIcons>
          </Toolbar>
          <Page><Heading>Products from E-commerce Company</Heading></Page>
        </Main>
        <Sidebar>
          <SideSlot $h={38}><Copilot id="ca" colors={["#16a5ea", "#12b5d6", "#6ce89a", "#4f7df0", "#1d7bea", "#22b4f5", "#0b6cae", "#2148d8"]} /></SideSlot>
          <SideSlot $h={63}><SideSearch /></SideSlot>
          <SideSlot $h={39}><Tag /></SideSlot>
          <SideSlot $h={62}><Toolbox /></SideSlot>
          <SideSlot $h={37}><Chess /></SideSlot>
          <SideSlot $h={64}><M365 /></SideSlot>
          <SideSlot $h={37}><Outlook /></SideSlot>
          <SideSlot $h={62}><Telegram /></SideSlot>
          <SideLine $mt={9} />
          <SideSlot $h={79}><Plus s={15} /></SideSlot>
          <SideLine $mt={426} />
          <SideSlot $h={54}><Gear /></SideSlot>
        </Sidebar>
      </Body>
      <Taskbar>
        <Weather>
          <SunIcon />
          <TaskText>35°C<Dim>Sunny</Dim></TaskText>
        </Weather>
        <AppSlot><AppTile><AppIcon><StartIcon /></AppIcon><Indicator /></AppTile></AppSlot>
        <SearchPill><SearchIcon /><SearchText>Search</SearchText><Shell /></SearchPill>
        {APPS.map(([icon, state], i) => (
          <AppSlot key={i}><AppTile $active={state === "active"}><AppIcon>{icon}</AppIcon><Indicator $state={state} /></AppTile></AppSlot>
        ))}
        <Tray>
          <TrayIcon $w={40}><Line w={14} h={8} sw={2}><path d="M1 7l6-6 6 6" /></Line></TrayIcon>
          <TaskText $w={56} $align="center" $pt={8}>ENG<div>IN</div></TaskText>
          <TrayIcon $w={38}><Wifi /></TrayIcon>
          <TrayIcon $w={22}><Speaker /></TrayIcon>
          <TrayIcon $w={38}><Battery /></TrayIcon>
          <TaskText $w={89} $align="right" $pt={7} $ls={0}>12:02<div>12-07-2024</div></TaskText>
          <TrayIcon $w={38}><Bell /></TrayIcon>
        </Tray>
      </Taskbar>
    </Screen>
  );
}
